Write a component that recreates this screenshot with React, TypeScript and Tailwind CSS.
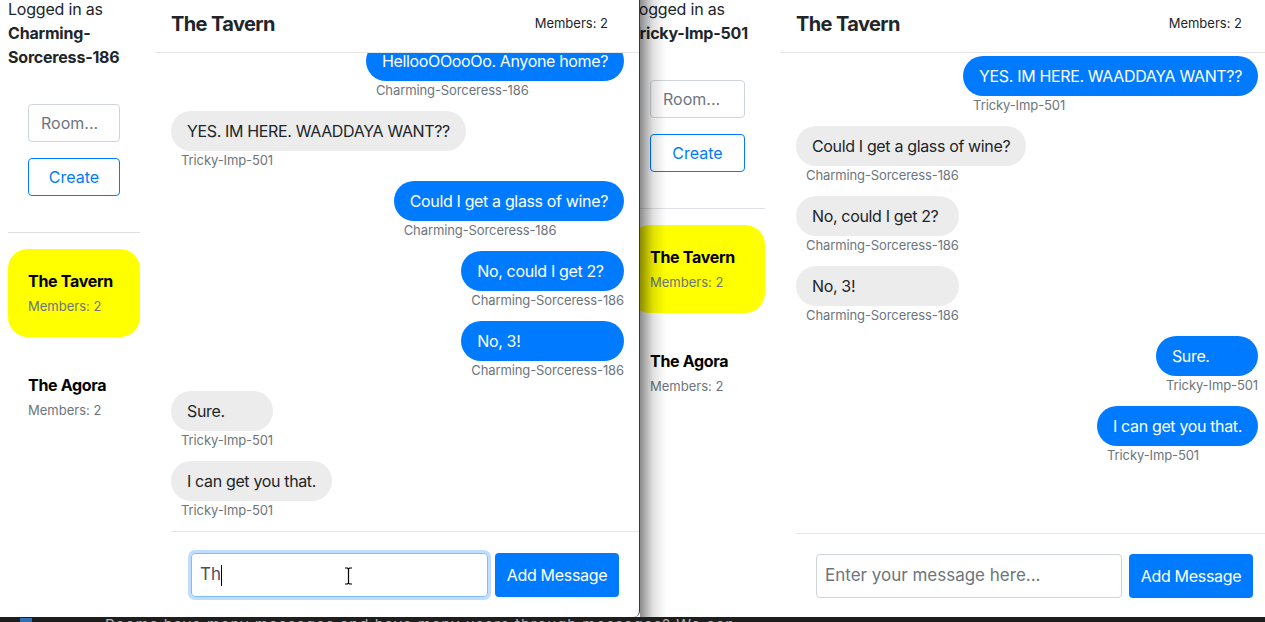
import React from "react";

type Msg = { text: string; author: string; mine: boolean };

const CS = "Charming-Sorceress-186";
const TI = "Tricky-Imp-501";

const leftMessages: Msg[] = [
  { text: "HellooOOooOo. Anyone home?", author: CS, mine: true },
  { text: "YES. IM HERE. WAADDAYA WANT??", author: TI, mine: false },
  { text: "Could I get a glass of wine?", author: CS, mine: true },
  { text: "No, could I get 2?", author: CS, mine: true },
  { text: "No, 3!", author: CS, mine: true },
  { text: "Sure.", author: TI, mine: false },
  { text: "I can get you that.", author: TI, mine: false },
];

const rightMessages: Msg[] = [
  { text: "YES. IM HERE. WAADDAYA WANT??", author: TI, mine: true },
  { text: "Could I get a glass of wine?", author: CS, mine: false },
  { text: "No, could I get 2?", author: CS, mine: false },
  { text: "No, 3!", author: CS, mine: false },
  { text: "Sure.", author: TI, mine: true },
  { text: "I can get you that.", author: TI, mine: true },
];

function Bubble({ m }: { m: Msg }) {
  return (
    <div className={`flex shrink-0 mb-[11px] ${m.mine ? "justify-end" : "justify-start"}`}>
      <div className="flex flex-col">
        <div
          className={`h-10 px-4 rounded-[20px] flex items-center text-base tracking-[-0.35px] whitespace-nowrap ${
            m.mine ? "bg-[#007bff] text-white" : "bg-[#ececec] text-[#212529]"
          }`}
        >
          {m.text}
        </div>
        <div className="pl-[10px] text-[13px] leading-[19px] tracking-[-0.1px] text-[#6c757d] whitespace-nowrap">
          {m.author}
        </div>
      </div>
    </div>
  );
}

function RoomCard({ name, active }: { name: string; active?: boolean }) {
  return (
    <div className={`rounded-[20px] px-5 pt-5 pb-[22px] ${active ? "bg-[#ffff00]" : ""}`}>
      <div className="text-base leading-6 font-bold tracking-[-0.3px] text-black">{name}</div>
      <div className="mt-1 text-[13px] leading-[18px] text-[#6c757d]">Members: 2</div>
    </div>
  );
}

function Sidebar({ user, width }: { user: string; width: string }) {
  return (
    <aside className={`${width} shrink-0 pl-2 pr-[15px] flex flex-col`}>
      <p className="-mt-[3px] text-base leading-6 tracking-[-0.2px] text-[#212529]">
        Logged in as <b className="font-bold">{user}</b>
      </p>
      <div className="px-5 mt-[35px] flex flex-col gap-4">
        <div className="h-[38px] rounded border border-[#ced4da] px-3 flex items-center text-base text-[#6c757d]">
          Room...
        </div>
        <button className="h-[38px] rounded border border-[#007bff] text-[#007bff] text-base">
          Create
        </button>
      </div>
      <hr className="mt-9 border-t border-[#dee2e6]" />
      <div className="mt-4 flex flex-col gap-4">
        <RoomCard name="The Tavern" active />
        <RoomCard name="The Agora" />
      </div>
    </aside>
  );
}

function ChatWindow({
  user,
  messages,
  atBottom,
  typing,
  sidebarWidth,
  className,
}: {
  user: string;
  messages: Msg[];
  atBottom?: boolean;
  typing?: boolean;
  sidebarWidth: string;
  className: string;
}) {
  return (
    <div className={`absolute top-0 h-[617px] bg-white flex overflow-hidden ${className}`}>
      <Sidebar user={user} width={sidebarWidth} />
      <section className="flex-1 min-w-0 flex flex-col">
        <header className="h-[53px] shrink-0 border-b border-[#e6e6e6] pl-4 pr-[31px] pb-1 flex items-center justify-between">
          <h1 className="text-xl font-bold tracking-[-0.6px] text-[#212529]">The Tavern</h1>
          <span className="text-[13px] text-[#212529]">Members: 2</span>
        </header>
        <div
          className={`flex-1 min-h-0 overflow-hidden ml-4 mr-[15px] flex flex-col ${
            atBottom ? "justify-end" : "justify-start pt-[3px]"
          }`}
        >
          {messages.map((m, i) => (
            <Bubble key={i} m={m} />
          ))}
        </div>
        <div
          className={`ml-4 border-t border-[#e6e6e6] px-5 flex gap-[7px] ${
            typing ? "pt-[21px] pb-5" : "pt-5 pb-[19px]"
          }`}
        >
          {typing ? (
            <div className="relative flex-1 min-w-0 h-[44px] rounded border border-[#80bdff] shadow-[0_0_0_3px_rgba(0,123,255,0.25)] px-2 flex items-center text-[17px] text-[#495057]">
              Th
              <span className="w-px h-[21px] bg-black" />
              <svg className="absolute left-[152px] top-[13px]" width="9" height="18" viewBox="0 0 9 18">
                <path d="M1 1h2.5L4.5 2 5.5 1H8M4.5 2v14M1 17h2.5l1-1 1 1H8" stroke="#000" strokeWidth="1.2" fill="none" />
              </svg>
            </div>
          ) : (
            <div className="flex-1 min-w-0 h-[44px] rounded border border-[#ced4da] px-2 flex items-center text-[17px] text-[#6c757d]">
              Enter your message here...
            </div>
          )}
          <button className="w-[124px] shrink-0 h-[44px] rounded bg-[#007bff] text-white text-base tracking-[-0.3px]">
            Add Message
          </button>
        </div>
      </section>
    </div>
  );
}

export default function App() {
  return (
    <div className="w-[1265px] h-[622px] overflow-hidden bg-[#1e1e1e] flex flex-col font-['Inter',sans-serif]">
      <div className="relative h-[617px] shrink-0">
        <ChatWindow
          user={TI}
          messages={rightMessages}
          sidebarWidth="w-[158px]"
          className="left-[622px] w-[651px]"
        />
        <ChatWindow
          user={CS}
          messages={leftMessages}
          atBottom
          typing
          sidebarWidth="w-[155px]"
          className="left-0 w-[640px] z-10 border-r border-[#3a3a3a] rounded-br-[6px]"
        />
        <div className="absolute left-[640px] top-0 z-10 w-[26px] h-[617px] bg-linear-to-r from-[rgba(0,0,0,0.45)] via-[rgba(0,0,0,0.12)] to-transparent" />
      </div>
      <div className="h-[5px] overflow-hidden relative">
        <div className="absolute left-[20px] top-[1px] w-[12px] h-[4px] bg-[#2f6fb8]" />
        <p className="pl-[105px] text-[15px] leading-[15px] text-[#b0b0b0] whitespace-nowrap tracking-[1px]">
          Rooms have many messages and have many users through messages? We can
        </p>
      </div>
    </div>
  );
}
